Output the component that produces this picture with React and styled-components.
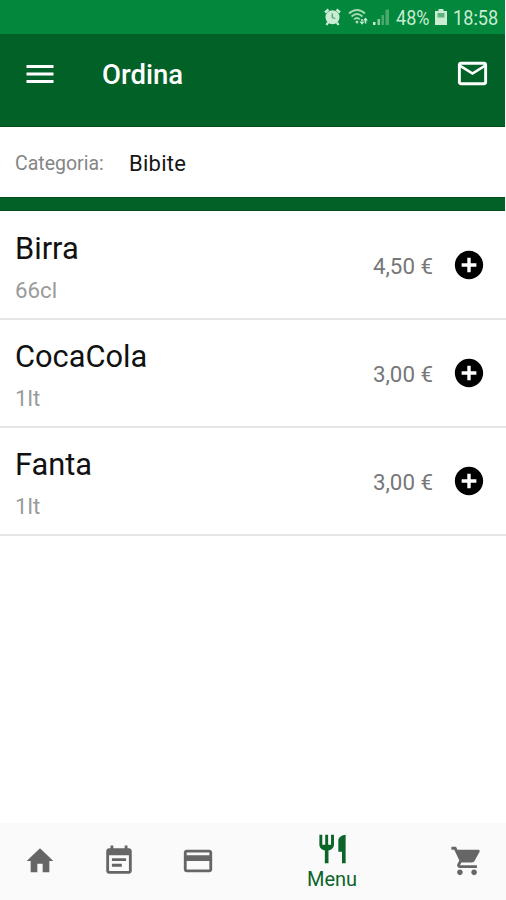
import React from "react";
import styled, { createGlobalStyle } from "styled-components";

const GlobalStyle = createGlobalStyle`
  *, *::before, *::after { box-sizing: border-box; }
  html, body { margin: 0; background: #fff; }
  body { font-family: Roboto, "Liberation Sans", sans-serif; }
`;

const Screen = styled.div`
  width: 506px;
  height: 900px;
  display: flex;
  flex-direction: column;
  background: #fff;
  overflow: hidden;
`;

const StatusBar = styled.div`
  height: 34px;
  flex: none;
  margin-right: 1px;
  background: #02873c;
  color: #c9ecd2;
  display: flex;
  align-items: center;
  padding-left: 324px;
`;

const StatusIcon = styled.svg`
  display: block;
  flex: none;
  width: ${(p) => p.$w}px;
  height: 18px;
  margin-right: ${(p) => p.$gap}px;
`;

const StatusText = styled.span`
  width: ${(p) => p.$w}px;
  flex: none;
  font-size: 20.5px;
  line-height: 34px;
  padding-top: 1px;
  white-space: nowrap;
  transform: scaleX(${(p) => p.$squeeze});
  transform-origin: left center;
`;

const Header = styled.header`
  height: 93px;
  flex: none;
  margin-right: 1px;
  background: #026127;
  border-bottom: 1px solid #03501a;
  color: #fff;
  display: flex;
  align-items: flex-start;
  padding: 22px 15px 0 22px;
`;

const Title = styled.h1`
  flex: 1;
  margin: 0 0 0 44px;
  font-size: 27.5px;
  font-weight: 500;
  line-height: 38px;
`;

const IconButton = styled.button`
  display: block;
  flex: none;
  border: 0;
  padding: 0;
  background: none;
  color: inherit;
`;

const Glyph = styled.svg`
  display: block;
  width: ${(p) => p.$w}px;
  height: ${(p) => p.$h || p.$w}px;
  fill: currentColor;
`;

const Filter = styled.div`
  height: 70px;
  flex: none;
  display: flex;
  align-items: center;
  padding: 2px 0 0 15px;
`;

const FilterLabel = styled.span`
  width: 114px;
  font-size: 19.5px;
  color: #858585;
`;

const FilterValue = styled.span`
  font-size: 22px;
  color: #161616;
  letter-spacing: 0.25px;
`;

const Band = styled.div`
  height: 14px;
  flex: none;
  margin-right: 1px;
  background: #026127;
  border-top: 1px solid #03501a;
  border-bottom: 1px solid #03501a;
`;

const List = styled.ul`
  flex: 1;
  margin: 0;
  padding: 1px 0 0;
  list-style: none;
`;

const Row = styled.li`
  height: 108px;
  display: flex;
  align-items: center;
  padding: 0 20px 0 15px;
  border-bottom: 2px solid #e5e5e5;
`;

const Product = styled.div`
  flex: 1;
  padding-top: 9px;
`;

const Name = styled.div`
  font-size: 30.8px;
  line-height: 42px;
  color: #111;
`;

const Size = styled.div`
  font-size: 22.3px;
  line-height: 40px;
  padding-bottom: 2px;
  color: #9b9b9b;
`;

const Price = styled.span`
  margin-right: 19px;
  padding-top: 1px;
  font-size: 22.3px;
  color: #777;
`;

const AddButton = styled(IconButton)`
  color: #000;
`;

const Nav = styled.nav`
  height: 77px;
  flex: none;
  display: flex;
  background: #fafafa;
`;

const Tab = styled.a`
  width: ${(p) => (p.$active ? 190 : 79)}px;
  display: flex;
  flex-direction: column;
  align-items: center;
  padding-top: ${(p) => (p.$active ? 9 : 21)}px;
  color: ${(p) => (p.$active ? "#0b6529" : "#666")};
`;

const TabLabel = styled.span`
  font-size: 20px;
  line-height: 26px;
`;

const PATHS = {
  menu: "M3 18h18v-2H3v2zm0-5h18v-2H3v2zm0-7v2h18V6H3z",
  mail: "M20 4H4c-1.1 0-1.99.9-1.99 2L2 18c0 1.1.9 2 2 2h16c1.1 0 2-.9 2-2V6c0-1.1-.9-2-2-2zm0 14H4V8l8 5 8-5v10zm-8-7L4 6h16l-8 5z",
  add: "M12 2C6.48 2 2 6.48 2 12s4.48 10 10 10 10-4.48 10-10S17.52 2 12 2zm5.2 11.2h-4v4h-2.4v-4h-4v-2.4h4v-4h2.4v4h4v2.4z",
  home: "M10 20v-6h4v6h5v-8h3L12 3 2 12h3v8z",
  event: "M17 10H7v2h10v-2zm2-7h-1V1h-2v2H8V1H6v2H5c-1.11 0-1.99.9-1.99 2L3 19c0 1.1.89 2 2 2h14c1.1 0 2-.9 2-2V5c0-1.1-.9-2-2-2zm0 16H5V8h14v11zm-5-5H7v2h7v-2z",
  card: "M20 4H4c-1.11 0-1.99.89-1.99 2L2 18c0 1.11.89 2 2 2h16c1.11 0 2-.89 2-2V6c0-1.11-.89-2-2-2zm0 14H4v-6h16v6zm0-10H4V6h16v2z",
  restaurant: "M11 9H9V2H7v7H5V2H3v7c0 2.12 1.66 3.84 3.75 3.97V22h2.5v-9.03C11.34 12.84 13 11.12 13 9V2h-2v7zm5-3v8h2.5v8H21V2c-2.76 0-5 2.24-5 4z",
  cart: "M7 18c-1.1 0-1.99.9-1.99 2S5.9 22 7 22s2-.9 2-2-.9-2-2-2zM1 2v2h2l3.6 7.59-1.35 2.45c-.16.28-.25.61-.25.96 0 1.1.9 2 2 2h12v-2H7.42c-.14 0-.25-.11-.25-.25l.03-.12.9-1.63h7.45c.75 0 1.41-.41 1.75-1.03l3.58-6.49c.08-.14.12-.31.12-.48 0-.55-.45-1-1-1H5.21l-.94-2H1zm16 16c-1.1 0-1.99.9-1.99 2s.89 2 1.99 2 2-.9 2-2-.9-2-2-2z",
};

const Icon = ({ name, w = 34, h }) => (
  <Glyph viewBox="0 0 24 24" preserveAspectRatio="none" $w={w} $h={h}>
    <path d={PATHS[name]} />
  </Glyph>
);

const PRODUCTS = [
  { name: "Birra", size: "66cl", price: "4,50 €" },
  { name: "CocaCola", size: "1lt", price: "3,00 €" },
  { name: "Fanta", size: "1lt", price: "3,00 €" },
];

const TABS = [
  { icon: "home", w: 32 },
  { icon: "event" },
  { icon: "card" },
  { icon: "restaurant", w: 35, label: "Menu" },
  { icon: "cart" },
];

export default function App() {
  return (
    <Screen>
      <GlobalStyle />
      <StatusBar>
        <StatusIcon $w={17} $gap={7} viewBox="0 0 17 18">
          <circle cx="8.5" cy="9.3" r="7" fill="#c9ecd2" />
          <path d="M1 4.5L4.5 1.5M16 4.5L12.5 1.5M4 14.5L2.5 17M13 14.5L14.5 17" stroke="#c9ecd2" strokeWidth="2.4" />
          <path d="M8.3 5.5v4l3 1" stroke="#4fa56c" strokeWidth="1.3" fill="none" />
        </StatusIcon>
        <StatusIcon $w={21} $gap={4} viewBox="0 0 21 18">
          <g fill="none" stroke="#a4dab4" strokeWidth="1.7">
            <path d="M1 5.5Q9 -1.5 17 5.5" />
            <path d="M3.5 8.5Q9 3.5 14.5 8.5" />
            <path d="M6 11.5Q9 8.5 12 11.5" />
          </g>
          <circle cx="9" cy="14" r="1.5" fill="#a4dab4" />
          <path d="M11.5 13.5L14 16.8L16.5 13.5zM15 12.5L17.5 9.5L20 12.5zM13.2 11h1.5v3h-1.5zM16.8 12h1.5v3.5h-1.5z" fill="#c9ecd2" />
        </StatusIcon>
        <StatusIcon $w={17} $gap={6} viewBox="0 0 17 18">
          <path d="M0 14h2.5v3H0z" fill="#c9ecd2" />
          <path d="M4.5 11H7v6H4.5z" fill="#8dcda0" />
          <path d="M8.5 7H11v10H8.5zM12.5 1.5H16V17h-3.5z" fill="#4aa86c" />
        </StatusIcon>
        <StatusText $w={39} $squeeze={0.88}>48%</StatusText>
        <StatusIcon $w={12} $gap={6} viewBox="0 0 12 18">
          <path d="M3.5 1h5v2H12v14H0V3h3.5z" fill="#c9ecd2" />
          <path d="M2.5 5h7v4.5h-7z" fill="#5db47b" />
        </StatusIcon>
        <StatusText $w={48} $squeeze={0.885}>18:58</StatusText>
      </StatusBar>

      <Header>
        <IconButton><Icon name="menu" w={36} /></IconButton>
        <Title>Ordina</Title>
        <IconButton><Icon name="mail" w={35} /></IconButton>
      </Header>

      <Filter>
        <FilterLabel>Categoria:</FilterLabel>
        <FilterValue>Bibite</FilterValue>
      </Filter>
      <Band />

      <List>
        {PRODUCTS.map((p) => (
          <Row key={p.name}>
            <Product>
              <Name>{p.name}</Name>
              <Size>{p.size}</Size>
            </Product>
            <Price>{p.price}</Price>
            <AddButton><Icon name="add" /></AddButton>
          </Row>
        ))}
      </List>

      <Nav>
        {TABS.map((t) => (
          <Tab key={t.icon} $active={Boolean(t.label)}>
            <Icon name={t.icon} w={t.w} h={34} />
            {t.label && <TabLabel>{t.label}</TabLabel>}
          </Tab>
        ))}
      </Nav>
    </Screen>
  );
}
